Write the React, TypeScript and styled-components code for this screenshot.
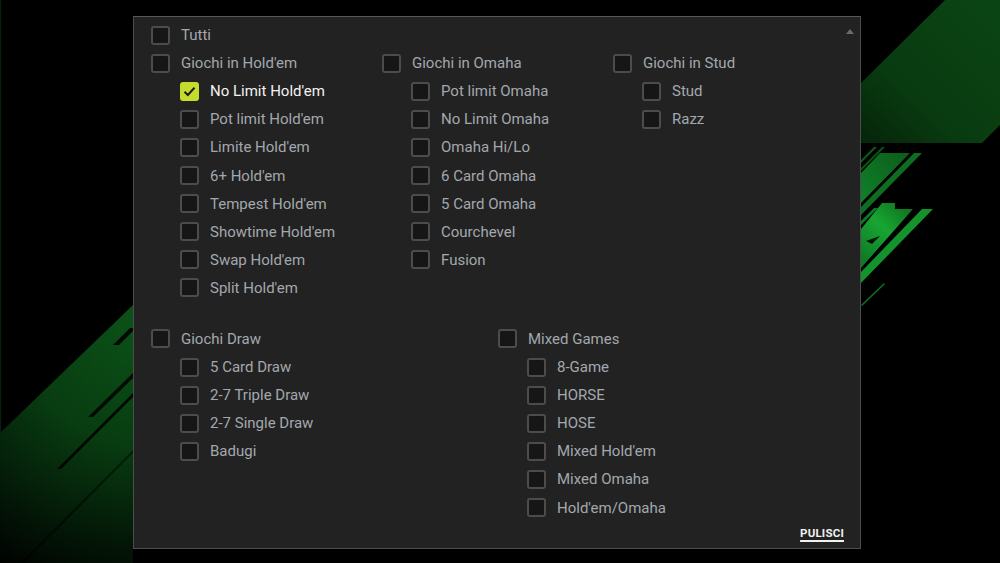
import React from "react";
import styled, { createGlobalStyle } from "styled-components";

const Global = createGlobalStyle`
  html, body { margin: 0; padding: 0; background: #000; }
  body { font-family: Roboto, "Noto Sans", Arial, sans-serif; width: 1000px; height: 563px; overflow: hidden; }
`;

const Page = styled.div`
  position: relative;
  width: 1000px;
  height: 563px;
  padding-top: 16px;
  box-sizing: border-box;
`;

const Backdrop = styled.svg`
  position: absolute;
  left: 0;
  top: 0;
  width: 1000px;
  height: 563px;
`;

const Panel = styled.div`
  position: relative;
  margin-left: 133px;
  width: 728px;
  height: 533px;
  box-sizing: border-box;
  background: #222222;
  border: 1px solid #4d4d4d;
  border-top-color: #5a5a5a;
  padding: 4px 16px 0 17px;
  display: flex;
  flex-direction: column;
`;

const ScrollArrow = styled.div`
  position: absolute;
  right: 6px;
  top: 12px;
  width: 0;
  height: 0;
  border-left: 4px solid transparent;
  border-right: 4px solid transparent;
  border-bottom: 5px solid #6a6a6a;
`;

const Grid = styled.div<{ $cols: number; $colw: number }>`
  display: grid;
  grid-template-columns: repeat(${(p) => p.$cols}, ${(p) => p.$colw}px);
  align-items: start;
`;

const Column = styled.div`
  display: flex;
  flex-direction: column;
`;

const Row = styled.label<{ $indent?: boolean }>`
  display: flex;
  align-items: center;
  gap: 11px;
  height: 28.1px;
  padding-left: ${(p) => (p.$indent ? 29 : 0)}px;
  font-size: 15px;
  color: #a3a8ae;
  white-space: nowrap;
`;

const Label = styled.span<{ $on?: boolean }>`
  color: ${(p) => (p.$on ? "#f2f2f2" : "#a3a8ae")};
  line-height: 18px;
`;

const Box = styled.span<{ $on?: boolean }>`
  box-sizing: border-box;
  width: 19px;
  height: 19px;
  border-radius: 3px;
  border: 2px solid ${(p) => (p.$on ? "#c6dc2c" : "#4c4c4c")};
  background: ${(p) => (p.$on ? "#c6dc2c" : "#161616")};
  display: flex;
  align-items: center;
  justify-content: center;
  flex: none;
`;

const Spacer = styled.div`
  height: 23px;
`;

const Footer = styled.div`
  display: flex;
  justify-content: flex-end;
  margin-top: 4px;
`;

const Clear = styled.span`
  font-size: 11.5px;
  font-weight: 700;
  color: #f0f0f0;
  text-decoration: underline;
  text-underline-offset: 3px;
  text-decoration-thickness: 2px;
  letter-spacing: 0.2px;
`;

function Check({ label, on, indent }: { label: string; on?: boolean; indent?: boolean }) {
  return (
    <Row $indent={indent}>
      <Box $on={on}>
        {on && (
          <svg width="13" height="11" viewBox="0 0 13 11">
            <path d="M1.5 5.8 L4.8 9 L11.5 1.8" fill="none" stroke="#1b1b1b" strokeWidth="2" />
          </svg>
        )}
      </Box>
      <Label $on={on}>{label}</Label>
    </Row>
  );
}

function Group({ title, items, checked }: { title: string; items: string[]; checked?: string }) {
  return (
    <Column>
      <Check label={title} />
      {items.map((it) => (
        <Check key={it} label={it} indent on={it === checked} />
      ))}
    </Column>
  );
}

export default function App() {
  return (
    <>
      <Global />
      <Page>
        <Backdrop viewBox="0 0 1000 563">
          <defs>
            <radialGradient id="gl" cx="150" cy="310" r="300" gradientUnits="userSpaceOnUse">
              <stop offset="0" stopColor="#0c5418" />
              <stop offset="0.45" stopColor="#083d11" />
              <stop offset="0.8" stopColor="#031506" />
              <stop offset="1" stopColor="#000" />
            </radialGradient>
            <linearGradient id="gr" x1="990" y1="10" x2="861" y2="150" gradientUnits="userSpaceOnUse">
              <stop offset="0" stopColor="#0b4414" />
              <stop offset="0.6" stopColor="#093b10" />
              <stop offset="1" stopColor="#052309" />
            </linearGradient>
            <linearGradient id="gs1" x1="915" y1="150" x2="861" y2="200" gradientUnits="userSpaceOnUse">
              <stop offset="0" stopColor="#0b5a18" />
              <stop offset="1" stopColor="#10802a" />
            </linearGradient>
            <linearGradient id="gs2" x1="915" y1="205" x2="862" y2="260" gradientUnits="userSpaceOnUse">
              <stop offset="0" stopColor="#0d6a1c" />
              <stop offset="0.5" stopColor="#18a532" />
              <stop offset="1" stopColor="#0f7a24" />
            </linearGradient>
          </defs>
          <rect x="0" y="0" width="1000" height="563" fill="#000" />
          <rect x="0" y="0" width="1.2" height="563" fill="#03200a" />
          <polygon points="0,433 133,305 133,563 0,563" fill="url(#gl)" />
          <polygon points="113,345 130,328 133,328 133,331 119,345" fill="#000" opacity="0.9" />
          <polygon points="88,417 133,373 133,378 93,417" fill="#000" opacity="0.85" />
          <polygon points="57,469 133,393 133,397 61,469" fill="#000" opacity="0.85" />
          <polygon points="20,563 133,450 133,453 24,563" fill="#000" opacity="0.45" />
          <polygon points="861,83 945,0 1000,0 1000,125 982,143 861,143" fill="url(#gr)" />
          <polygon points="861,160 874,147 877,147 861,163" fill="#0c5a18" />
          <polygon points="861,168 882,147 885,147 861,171" fill="#0b5216" />
          <polygon points="880,153 910,153 861,203 861,173" fill="url(#gs1)" />
          <polygon points="914,153 922,153 861,215 861,207" fill="#0e6d20" />
          <polygon points="861,221 874,208 878,208 861,225" fill="#10782a" />
          <polygon points="882,203 895,203 895,209 913,209 861,268 861,229" fill="url(#gs2)" />
          <polygon points="866,241 880,236 872,244" fill="#02140a" />
          <polygon points="922,209 933,209 861,283 861,272" fill="#14922b" />
          <polygon points="861,305 884,283 885,284 862,306" fill="#0e7424" />
        </Backdrop>
        <Panel>
          <ScrollArrow />
          <Check label="Tutti" />
          <Grid $cols={3} $colw={231}>
            <Group
              title="Giochi in Hold'em"
              checked="No Limit Hold'em"
              items={[
                "No Limit Hold'em",
                "Pot limit Hold'em",
                "Limite Hold'em",
                "6+ Hold'em",
                "Tempest Hold'em",
                "Showtime Hold'em",
                "Swap Hold'em",
                "Split Hold'em",
              ]}
            />
            <Group
              title="Giochi in Omaha"
              items={[
                "Pot limit Omaha",
                "No Limit Omaha",
                "Omaha Hi/Lo",
                "6 Card Omaha",
                "5 Card Omaha",
                "Courchevel",
                "Fusion",
              ]}
            />
            <Group title="Giochi in Stud" items={["Stud", "Razz"]} />
          </Grid>
          <Spacer />
          <Grid $cols={2} $colw={347}>
            <Group
              title="Giochi Draw"
              items={["5 Card Draw", "2-7 Triple Draw", "2-7 Single Draw", "Badugi"]}
            />
            <Group
              title="Mixed Games"
              items={["8-Game", "HORSE", "HOSE", "Mixed Hold'em", "Mixed Omaha", "Hold'em/Omaha"]}
            />
          </Grid>
          <Footer>
            <Clear>PULISCI</Clear>
          </Footer>
        </Panel>
      </Page>
    </>
  );
}
